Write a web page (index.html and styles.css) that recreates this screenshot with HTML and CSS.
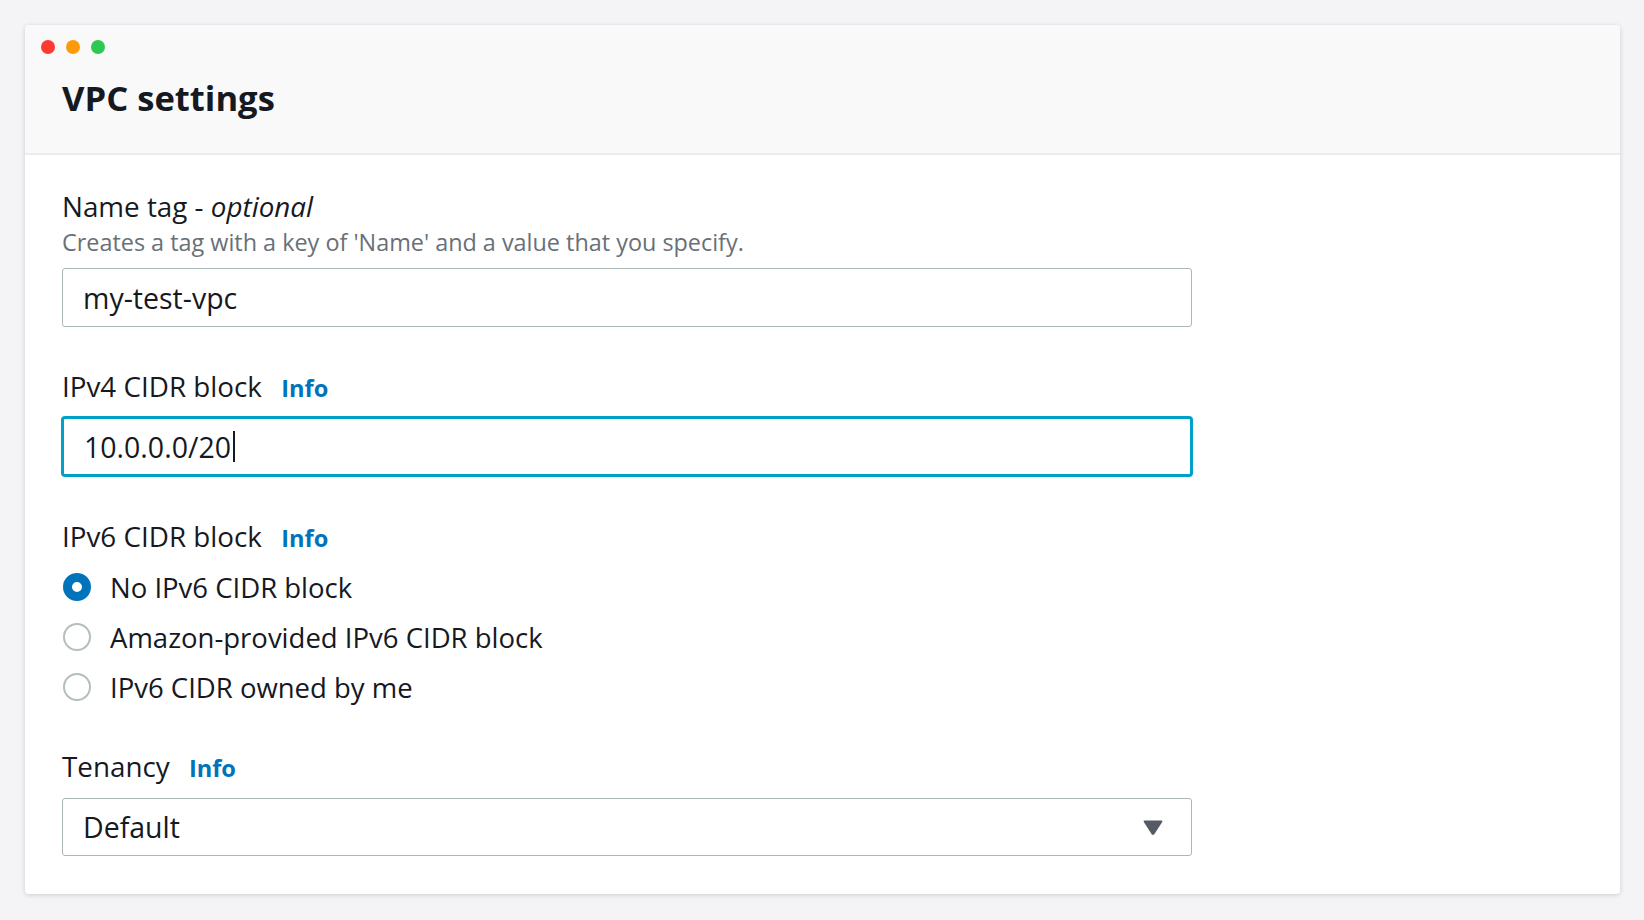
FILE: index.html
```html
<!DOCTYPE html>
<html lang="en">
<head>
<meta charset="utf-8">
<title>VPC settings</title>
<link rel="stylesheet" href="styles.css">
</head>
<body>
<div class="card">
  <div class="card-header">
    <div class="dots">
      <span class="dot red"></span>
      <span class="dot orange"></span>
      <span class="dot green"></span>
    </div>
    <h1 class="title">VPC settings</h1>
  </div>
  <div class="card-body">
    <div class="field field-name">
      <div class="label">Name tag - <em>optional</em></div>
      <div class="desc">Creates a tag with a key of 'Name' and a value that you specify.</div>
      <div class="input input-first">my-test-vpc</div>
    </div>
    <div class="field field-ipv4">
      <div class="label">IPv4 CIDR block <span class="info">Info</span></div>
      <div class="input focused">10.0.0.0/20<span class="caret"></span></div>
    </div>
    <div class="field">
      <div class="label">IPv6 CIDR block <span class="info">Info</span></div>
      <div class="radios">
        <div class="radio-row"><span class="radio checked"></span><span>No IPv6 CIDR block</span></div>
        <div class="radio-row"><span class="radio"></span><span>Amazon-provided IPv6 CIDR block</span></div>
        <div class="radio-row"><span class="radio"></span><span>IPv6 CIDR owned by me</span></div>
      </div>
    </div>
    <div class="field field-tenancy">
      <div class="label">Tenancy <span class="info">Info</span></div>
      <div class="input select">
        <span>Default</span>
        <svg class="arrow" width="22" height="17" viewBox="0 0 22 17"><path d="M2.5 1.5 H19.5 Q21 1.5 20.2 2.9 L12.3 15.2 Q11 16.8 9.7 15.2 L1.8 2.9 Q1 1.5 2.5 1.5 Z" fill="#545b64"/></svg>
      </div>
    </div>
  </div>
</div>
</body>
</html>
```

FILE: styles.css
```css
html, body {
  margin: 0;
  padding: 0;
}
body {
  background: #f4f4f6;
  font-family: "Open Sans", "Liberation Sans", sans-serif;
  color: #16191f;
  width: 1644px;
  height: 920px;
  overflow: hidden;
}
.card {
  margin: 25px 24px 0 25px;
  height: 869px;
  background: #ffffff;
  border-radius: 4px;
  box-shadow: 0 1px 5px rgba(0, 0, 0, 0.16);
  overflow: hidden;
  display: flex;
  flex-direction: column;
}
.card-header {
  flex-shrink: 0;
  height: 130px;
  box-sizing: border-box;
  background: #f9f9fa;
  border-bottom: 2px solid #eaeded;
  padding: 15px 37px 0 15px;
  display: flex;
  flex-direction: column;
}
.dots {
  display: flex;
  gap: 11px;
  height: 14px;
  padding-left: 1px;
}
.dot {
  width: 14px;
  height: 14px;
  border-radius: 50%;
}
.red { background: #fd3b30; }
.orange { background: #fd9a0a; }
.green { background: #2fc852; }
.title {
  margin: 22px 0 0 22px;
  font-size: 34.6px;
  line-height: 44px;
  font-weight: 700;
  color: #16191f;
}
.card-body {
  flex-shrink: 0;
  padding: 35px 37px 0 37px;
  display: flex;
  flex-direction: column;
}
.field {
  display: flex;
  flex-direction: column;
  margin-bottom: 45px;
}
.field-name {
  margin-bottom: 43px;
}
.field-ipv4 {
  margin-bottom: 43px;
}
.label {
  font-size: 27.8px;
  line-height: 32px;
  height: 32px;
  color: #16191f;
  white-space: nowrap;
}
.label em {
  font-style: italic;
}
.info {
  color: #0073bb;
  font-weight: 700;
  font-size: 23.6px;
  margin-left: 12px;
}
.desc {
  margin-top: 5px;
  font-size: 23.4px;
  line-height: 30px;
  color: #687078;
  white-space: nowrap;
}
.input {
  width: 1130px;
  height: 59px;
  box-sizing: border-box;
  border: 1px solid #aab7b8;
  border-radius: 3px;
  margin-top: 14px;
  padding: 0 20px;
  display: flex;
  align-items: center;
  font-size: 28.5px;
  color: #16191f;
  background: #fff;
}
.input-first {
  margin-top: 11px;
}
.focused {
  border: 3px solid #00a1c9;
  border-radius: 4px;
  height: 61px;
  width: 1132px;
  margin-left: -1px;
  margin-top: 14px;
  padding-left: 20px;
}
.caret {
  display: inline-block;
  width: 2px;
  height: 31px;
  background: #16191f;
  margin-left: 2px;
}
.radios {
  margin-top: 10px;
  display: flex;
  flex-direction: column;
}
.radio-row {
  height: 50px;
  display: flex;
  align-items: center;
  font-size: 27.5px;
  gap: 19px;
}
.radio {
  width: 28px;
  height: 28px;
  box-sizing: border-box;
  border: 2px solid #b4bebf;
  border-radius: 50%;
  margin-left: 1px;
}
.radio.checked {
  border: 9px solid #0073bb;
  background: #fff;
}
.field-tenancy {
  margin-top: -7px;
}
.select {
  justify-content: space-between;
  height: 58px;
  margin-top: 16px;
  padding-right: 27px;
}
.arrow {
  display: block;
}
```
